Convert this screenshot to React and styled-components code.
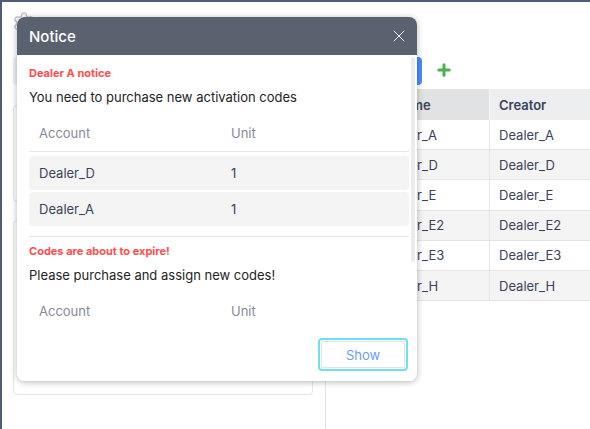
import React from "react";
import styled, { createGlobalStyle } from "styled-components";
import { Settings, X, Plus } from "lucide-react";

const GlobalStyle = createGlobalStyle`
  html, body {
    margin: 0;
    padding: 0;
    background: #fff;
    font-family: Inter, "Liberation Sans", sans-serif;
  }
  * { box-sizing: border-box; }
`;

const Page = styled.div`
  position: relative;
  width: 590px;
  height: 429px;
  overflow: hidden;
  display: flex;
  background: #fff;
  border-top: 2px solid #4e5c78;
  border-left: 2px solid #4e5c78;
`;

const LeftPanel = styled.div`
  width: 323px;
  padding: 11px 12px 0 11px;
  display: flex;
  flex-direction: column;
  flex-shrink: 0;
`;

const GearRow = styled.div`
  height: 44px;
  color: #c2c4c9;
  display: flex;
  align-items: flex-start;
  margin-left: -1px;
`;

const GearIcon = styled(Settings)`
  margin-top: -2px;
`;

const FilterBox = styled.div`
  height: 28px;
  border-radius: 4px;
  background: #eeeff0;
  margin-bottom: 20px;
`;

const Card = styled.div`
  height: ${props => props.$height}px;
  border: 1px solid #e4e5e7;
  border-radius: 4px;
  margin-bottom: 18px;
`;

const RightPanel = styled.div`
  flex: 1;
  min-width: 0;
  margin-top: 38px;
  border-left: 1px solid #e3e4e6;
  padding: 17px 0 0 12px;
`;

const Toolbar = styled.div`
  height: 32px;
  display: flex;
  align-items: flex-start;
`;

const BlueButton = styled.div`
  width: 84px;
  height: 28px;
  border-radius: 4px;
  background: #4a8cff;
`;

const AddIcon = styled(Plus)`
  color: #4caf50;
  margin: 4px 0 0 13px;
`;

const Table = styled.div`
  width: 300px;
  display: grid;
  grid-template-columns: 152px 148px;
  font-size: 13px;
  color: #3a4358;
`;

const HeadCell = styled.div`
  height: 31px;
  display: flex;
  align-items: center;
  font-weight: 600;
  background: ${props => (props.$sorted ? "#e1e2e4" : "#eceeef")};
  border-right: 1px solid #f4f5f6;
  padding-left: ${props => (props.$sorted ? 56 : 9)}px;
`;

const Cell = styled.div`
  height: 30.2px;
  display: flex;
  align-items: center;
  background: ${props => (props.$even ? "#f4f4f5" : "#fff")};
  border-bottom: 1px solid #e4e5e7;
  border-right: 1px solid #e4e5e7;
  padding-left: ${props => (props.$first ? 44 : 9)}px;
`;

const Modal = styled.div`
  position: absolute;
  left: 15px;
  top: 15px;
  width: 400px;
  height: 364px;
  display: flex;
  flex-direction: column;
  background: #fff;
  border-radius: 8px;
  box-shadow: 0 1px 6px rgba(0, 0, 0, 0.3);
  overflow: hidden;
`;

const ModalHeader = styled.div`
  height: 38px;
  flex-shrink: 0;
  background: #5a6270;
  color: #fff;
  display: flex;
  align-items: center;
  justify-content: space-between;
  padding: 0 8px 0 12px;
  font-size: 15px;
  font-weight: 500;
`;

const CloseIcon = styled(X)`
  color: #f2f3f4;
`;

const ModalBody = styled.div`
  position: relative;
  flex: 1;
  min-height: 0;
  overflow: hidden;
  padding: 11px 8px 0 12px;
`;

const ScrollThumb = styled.div`
  position: absolute;
  top: 2px;
  right: 2px;
  width: 4px;
  height: 205px;
  border-radius: 2px;
  background: #ececed;
`;

const Warning = styled.div`
  font-size: 11px;
  line-height: 14px;
  font-weight: 700;
  color: #ff4d4f;
`;

const Message = styled.div`
  font-size: 13px;
  line-height: 17px;
  color: #222326;
  margin-top: 9px;
`;

const ListHead = styled.div`
  height: ${props => (props.$line ? 38 : 39)}px;
  margin-top: ${props => (props.$line ? 8 : 7)}px;
  padding: 0 10px;
  display: grid;
  grid-template-columns: 192px 1fr;
  align-items: center;
  font-size: 13px;
  color: #858a97;
  border-bottom: ${props => (props.$line ? "1px solid #e6e7e9" : "none")};
`;

const ListRow = styled.div`
  height: 34px;
  margin-top: ${props => props.$gap}px;
  padding: 0 10px;
  display: grid;
  grid-template-columns: 192px 1fr;
  align-items: center;
  font-size: 13px;
  color: #3a4358;
  background: #f4f4f5;
  border-radius: 4px;
`;

const Divider = styled.div`
  height: 1px;
  background: #e6e7e9;
  margin: 10px 0 7px;
`;

const ModalFooter = styled.div`
  height: 51px;
  flex-shrink: 0;
  display: flex;
  align-items: flex-start;
  justify-content: flex-end;
  padding: 8px 9px 0 0;
  background: #fff;
`;

const ShowButton = styled.button`
  width: 90px;
  height: 33px;
  padding: 0;
  border: 2px solid #6ee0f5;
  border-radius: 4px;
  background: #fff;
  color: #6a9dff;
  font: 13px Inter, "Liberation Sans", sans-serif;
  box-shadow: inset 0 0 0 1px #fff, inset 0 0 0 2px #e3e4e6;
`;

const dealers = ["A", "D", "E", "E2", "E3", "H"];

export default function App() {
  return (
    <>
      <GlobalStyle />
      <Page>
        <LeftPanel>
          <GearRow>
            <GearIcon size={24} strokeWidth={1.4} />
          </GearRow>
          <FilterBox />
          <Card $height={97} />
          <Card $height={175} />
        </LeftPanel>
        <RightPanel>
          <Toolbar>
            <BlueButton />
            <AddIcon size={18} strokeWidth={4} />
          </Toolbar>
          <Table>
            <HeadCell $sorted>Name</HeadCell>
            <HeadCell>Creator</HeadCell>
            {dealers.map((d, i) => (
              <React.Fragment key={d}>
                <Cell $first $even={i % 2 === 1}>Dealer_{d}</Cell>
                <Cell $even={i % 2 === 1}>Dealer_{d}</Cell>
              </React.Fragment>
            ))}
          </Table>
        </RightPanel>
        <Modal>
          <ModalHeader>
            Notice
            <CloseIcon size={20} strokeWidth={1.2} />
          </ModalHeader>
          <ModalBody>
            <ScrollThumb />
            <Warning>Dealer A notice</Warning>
            <Message>You need to purchase new activation codes</Message>
            <ListHead $line>
              <span>Account</span>
              <span>Unit</span>
            </ListHead>
            <ListRow $gap={4}>
              <span>Dealer_D</span>
              <span>1</span>
            </ListRow>
            <ListRow $gap={2}>
              <span>Dealer_A</span>
              <span>1</span>
            </ListRow>
            <Divider />
            <Warning>Codes are about to expire!</Warning>
            <Message>Please purchase and assign new codes!</Message>
            <ListHead>
              <span>Account</span>
              <span>Unit</span>
            </ListHead>
          </ModalBody>
          <ModalFooter>
            <ShowButton>Show</ShowButton>
          </ModalFooter>
        </Modal>
      </Page>
    </>
  );
}
